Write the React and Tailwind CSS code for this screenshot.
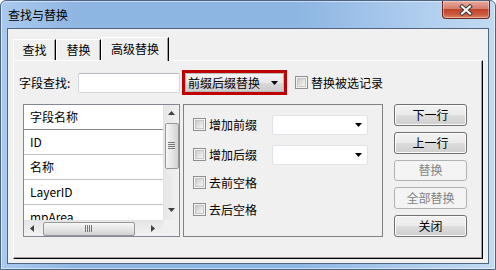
import React from 'react'

const ArrowDown = ({ color = '#000' }) => (
  <svg width="7" height="4" viewBox="0 0 7 4">
    <path d="M0 0h7L3.5 4z" fill={color} />
  </svg>
)
const ArrowUp = () => (
  <svg width="7" height="4" viewBox="0 0 7 4">
    <path d="M0 4h7L3.5 0z" fill="#404040" />
  </svg>
)
const ArrowLeft = () => (
  <svg width="4" height="7" viewBox="0 0 4 7">
    <path d="M4 0v7L0 3.5z" fill="#404040" />
  </svg>
)
const ArrowRight = () => (
  <svg width="4" height="7" viewBox="0 0 4 7">
    <path d="M0 0v7L4 3.5z" fill="#404040" />
  </svg>
)

function Check() {
  return (
    <span className="block h-[13px] w-[13px] shrink-0 border border-[#8f8f8f] bg-[#f4f4f4] p-px">
      <span className="block h-full w-full border border-[#c6c6c6] bg-[linear-gradient(135deg,#cbcbcb,#f6f6f6)]" />
    </span>
  )
}

function Btn({ children, disabled }) {
  return disabled ? (
    <div className="flex h-[22px] w-[73px] items-center justify-center rounded-[3px] border border-[#adb2b5] bg-[#f4f4f4] text-[#838383]">
      {children}
    </div>
  ) : (
    <div className="flex h-[22px] w-[73px] items-center justify-center rounded-[3px] border border-[#707070] bg-[linear-gradient(#f2f2f2_0%,#ebebeb_50%,#dddddd_50%,#cfcfcf_100%)] shadow-[inset_0_0_0_1px_#fbfbfb]">
      {children}
    </div>
  )
}

function SmallCombo() {
  return (
    <div className="flex h-[20px] w-[96px] items-center justify-end rounded-[2px] border border-[#dfe3e8] bg-white pr-[5px]">
      <ArrowDown />
    </div>
  )
}

const rows = ['ID', '名称', 'LayerID', 'mpArea']

export default function App() {
  return (
    <div className="h-[270px] w-[496px] overflow-hidden rounded-t-[6px] border border-[#4d6482] bg-[linear-gradient(to_right,#a9caee,#8fb6e2_15%,#8db6e3_60%,#b3d0ef_88%,#c3daf2)] font-['Noto_Sans_CJK_SC',sans-serif] text-[12px] leading-[16px] text-black shadow-[inset_0_0_0_1px_rgba(255,255,255,0.5)]">
      {/* title bar */}
      <div className="flex h-[27px] items-start justify-between">
        <div className="pl-[7px] pt-[6px]">查找与替换</div>
        <div className="mr-[5px] flex h-[18px] w-[48px] items-center justify-center rounded-b-[4px] border border-t-0 border-[#6a2a22] bg-[linear-gradient(#e8ab9c,#d47f6c_45%,#c2432c_50%,#cb5a3e_80%,#dd8a6a)] shadow-[inset_0_0_0_1px_rgba(255,255,255,0.35)]">
          <svg width="14" height="12" viewBox="0 0 14 12">
            <path d="M3 2.5l8 7M11 2.5l-8 7" stroke="#3a3a3a" strokeWidth="4" strokeLinecap="square" />
            <path d="M3 2.5l8 7M11 2.5l-8 7" stroke="#fff" strokeWidth="2" strokeLinecap="square" />
          </svg>
        </div>
      </div>

      {/* client */}
      <div className="mx-[6px] h-[236px] border border-[#4f6580] bg-[#f0f0f0] pl-[5px] pt-[8px]">
        {/* tabs */}
        <div className="flex h-[23px] items-end">
          <div className="flex h-[21px] w-[43px] items-center justify-center border-l border-t border-white border-r-black shadow-[inset_-1px_0_0_#a0a0a0] [border-right-width:1px]">
            查找
          </div>
          <div className="flex h-[21px] w-[45px] items-center justify-center border-l border-t border-white border-r-black shadow-[inset_-1px_0_0_#a0a0a0] [border-right-width:1px]">
            替换
          </div>
          <div className="relative z-10 -mb-px flex h-[24px] w-[68px] items-center justify-center border-l border-t border-white border-r-black bg-[#f0f0f0] pb-[1px] shadow-[inset_-1px_0_0_#a0a0a0] [border-right-width:1px]">
            高级替换
          </div>
        </div>

        {/* panel */}
        <div className="h-[199px] w-[470px] border border-white border-b-black border-r-black pl-[5px] pt-[9px] shadow-[inset_-1px_-1px_0_#a0a0a0]">
          <div className="flex h-[25px] items-center">
            <div className="w-[59px]">字段查找:</div>
            <div className="h-[20px] w-[102px] rounded-[2px] border border-[#d4d8de] border-t-[#b4b7bd] bg-white" />
            <div className="ml-[2px] h-[25px] w-[105px] border-[3px] border-[#c00000]">
              <div className="flex h-full items-center justify-between border border-[#b9b9b9] bg-[linear-gradient(#f3f3f3,#e8e8e8_50%,#d9d9d9_51%,#cdcdcd)] pl-[2px] pr-[5px]">
                <span>前缀后缀替换</span>
                <ArrowDown />
              </div>
            </div>
            <div className="ml-[8px]">
              <Check />
            </div>
            <div className="ml-[3px]">替换被选记录</div>
          </div>

          <div className="mt-[9px] flex h-[133px] pl-[4px]">
            {/* list */}
            <div className="grid h-[133px] w-[157px] grid-cols-[1fr_16px] grid-rows-[1fr_16px] border border-[#828790] bg-white">
              <div className="overflow-hidden">
                <div className="flex h-[25px] items-center border-b border-[#8a8a8a] pl-[6px]">字段名称</div>
                {rows.map((r) => (
                  <div key={r} className="flex h-[25px] items-center border-b border-[#c4c4c4] pl-[6px]">
                    {r}
                  </div>
                ))}
              </div>
              <div className="flex flex-col items-center border-l border-[#e2e2e2] bg-[linear-gradient(to_right,#e6e6e6,#f2f2f2)]">
                <div className="flex h-[16px] items-center">
                  <ArrowUp />
                </div>
                <div className="mt-[2px] flex h-[46px] w-[14px] items-center justify-center rounded-[2px] border border-[#979797] bg-[linear-gradient(to_right,#f6f6f6,#e6e6e6_50%,#d2d2d2)]">
                  <svg width="7" height="8" viewBox="0 0 7 8">
                    <path d="M0 .5h7M0 2.5h7M0 4.5h7M0 6.5h7" stroke="#777" strokeWidth="1" />
                  </svg>
                </div>
                <div className="flex-1" />
                <div className="mb-[2px] flex h-[16px] items-center">
                  <ArrowDown color="#404040" />
                </div>
              </div>
              <div className="flex items-center border-t border-[#e2e2e2] bg-[linear-gradient(#e6e6e6,#f2f2f2)]">
                <div className="flex w-[16px] justify-center">
                  <ArrowLeft />
                </div>
                <div className="ml-[3px] flex h-[14px] w-[92px] items-center justify-center rounded-[2px] border border-[#979797] bg-[linear-gradient(#f6f6f6,#e6e6e6_50%,#d2d2d2)]">
                  <svg width="8" height="7" viewBox="0 0 8 7">
                    <path d="M.5 0v7M2.5 0v7M4.5 0v7M6.5 0v7" stroke="#777" strokeWidth="1" />
                  </svg>
                </div>
                <div className="flex-1" />
                <div className="mr-[2px] flex w-[16px] justify-center">
                  <ArrowRight />
                </div>
              </div>
              <div className="bg-[#f0f0f0]" />
            </div>

            {/* options group */}
            <div className="ml-[3px] h-[133px] w-[200px] border border-[#828282] pl-[9px] pt-[9px]">
              <div className="flex h-[21px] items-center">
                <Check />
                <div className="ml-[3px] w-[63px]">增加前缀</div>
                <SmallCombo />
              </div>
              <div className="mt-[9px] flex h-[21px] items-center">
                <Check />
                <div className="ml-[3px] w-[63px]">增加后缀</div>
                <SmallCombo />
              </div>
              <div className="mt-[7px] flex h-[21px] items-center">
                <Check />
                <div className="ml-[3px]">去前空格</div>
              </div>
              <div className="mt-[6px] flex h-[21px] items-center">
                <Check />
                <div className="ml-[3px]">去后空格</div>
              </div>
            </div>

            {/* buttons */}
            <div className="ml-[11px] flex flex-col gap-[6px]">
              <Btn>下一行</Btn>
              <Btn>上一行</Btn>
              <Btn disabled>替换</Btn>
              <Btn disabled>全部替换</Btn>
              <Btn>关闭</Btn>
            </div>
          </div>
        </div>
      </div>
    </div>
  )
}
